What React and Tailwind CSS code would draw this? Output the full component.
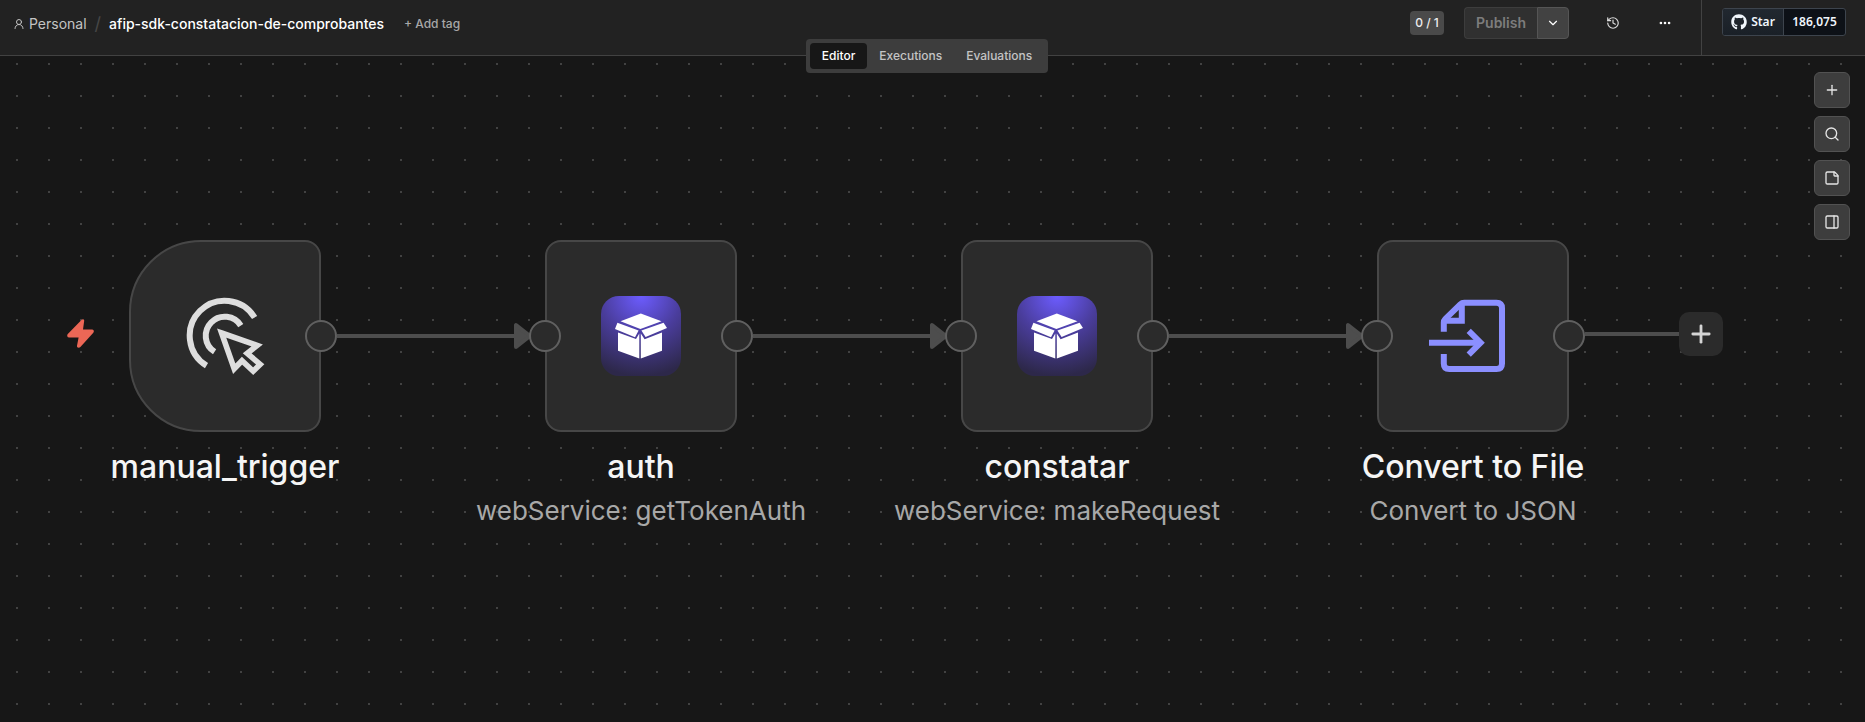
import { useState } from "react";
import { ChevronDown, Ellipsis, History, PanelRight, Plus, Search, StickyNote, UserRound } from "lucide-react";
import { FaGithub } from "react-icons/fa";

const TABS = ["Editor", "Executions", "Evaluations"];

const NODES = [
  { id: "trigger", left: 129, name: "manual_trigger", Icon: PointerIcon, trigger: true },
  { id: "auth", left: 545, name: "auth", subtitle: "webService: getTokenAuth", Icon: BoxIcon },
  { id: "constatar", left: 961, name: "constatar", subtitle: "webService: makeRequest", Icon: BoxIcon },
  { id: "convert", left: 1377, name: "Convert to File", subtitle: "Convert to JSON", Icon: FileIcon },
];

const TOOLS = [
  { label: "Add node", Icon: Plus },
  { label: "Search", Icon: Search },
  { label: "Add sticky note", Icon: StickyNote },
  { label: "Toggle panel", Icon: PanelRight },
];

function PointerIcon() {
  return (
    <svg className="size-20" viewBox="0 0 80 80" fill="none" stroke="#dedede" strokeWidth="6">
      <path d="M69.6 21.5A35 35 0 1 0 21.5 69.6" />
      <path d="M55.8 29.6A19 19 0 1 0 29.6 55.8" />
      <path d="M36.6 37 71.6 49.4 62.4 57.6 75.6 68.5 68.2 75.4 57.2 64.9 49.2 72.6Z" stroke="none" fill="#2b2b2b" />
      <path d="M36.6 37 72.2 49.4 62.2 57.4 75.2 68.3 68.2 75.2 57 64.7 49.2 72.8Z" strokeWidth="5.6" strokeMiterlimit="4" />
    </svg>
  );
}

function BoxIcon() {
  return (
    <svg className="size-20" viewBox="0 0 80 80">
      <defs>
        <radialGradient id="boxGlow" cx="0.5" cy="0" r="1">
          <stop offset="0" stopColor="#6c5cff" />
          <stop offset="0.5" stopColor="#4a3d9c" />
          <stop offset="1" stopColor="#2d284a" />
        </radialGradient>
      </defs>
      <rect width="80" height="80" rx="18" fill="url(#boxGlow)" />
      <g fill="#fff">
        <path d="M39.8 17.6 60.5 25.2 39.4 33 19.5 25.2Z" />
        <path d="M16.4 26.7 37.6 34.4 34 41.2 14 33Z" />
        <path d="M62.6 26.7 66 32 44.6 41 40.4 34.4Z" />
        <path d="M17 36.4 35 43 38.3 37.6V62.4L17 54.8Z" />
        <path d="M61 36.4 43.6 43.2 39.8 37.6V62.4L61 54.8Z" />
      </g>
    </svg>
  );
}

function FileIcon() {
  return (
    <svg className="size-20 overflow-visible" viewBox="0 0 80 80" fill="none" stroke="#8b8fff" strokeWidth="6">
      <path d="M10.8 35.7V26.5Q10.8 24.4 12.2 23L27.3 8.3Q29 6.7 31.2 6.7H63.5Q69 6.7 69 12.2V67.5Q69 73 63.5 73H16.3Q10.8 73 10.8 67.5V58" />
      <path d="M28.8 7V24.7H12" />
      <path d="M-4 46.7H48" />
      <path d="M35.7 34.9 47.6 46.7 35.7 58.7" />
    </svg>
  );
}

function Handle({ className }) {
  return <span className={`absolute top-20 size-8 rounded-full border-2 border-[#606060] bg-[#2b2b2b] ${className}`} />;
}

function WorkflowNode({ node, last }) {
  const { Icon, trigger } = node;
  return (
    <div className="absolute top-[184px] w-48" style={{ left: node.left }}>
      {trigger && (
        <svg className="absolute top-[77px] -left-16 size-8" viewBox="0 0 32 32" fill="#ec6756">
          <path d="M16.7 2.8C17.5 1.6 19.4 2.2 19.2 3.8L18 12.6H26.5C28.6 12.6 29.6 14.2 28.3 15.8L15.4 30C14.2 31.3 11.6 31 12 28.8L13.6 20.4H4.2C2.2 20.4 1.6 18.2 2.8 16.9Z" />
        </svg>
      )}
      <div
        className={`flex h-48 items-center justify-center border-2 border-[#474747] bg-[#2b2b2b] ${
          trigger ? "rounded-l-[72px] rounded-r-2xl" : "rounded-2xl"
        }`}
      >
        <Icon />
      </div>
      {!trigger && <Handle className="-left-4" />}
      <Handle className="-right-4" />
      {/* Caption is wider than the node, so centre it over the middle */}
      <div className="absolute top-[207px] left-1/2 -translate-x-1/2 text-center whitespace-nowrap">
        <div className="text-[32px] leading-10 font-medium text-[#f5f5f5]">{node.name}</div>
        {node.subtitle && <div className="mt-1 text-[26px] leading-10 text-[#a8a8a8]">{node.subtitle}</div>}
      </div>
      {last && (
        <div className="absolute top-[72px] left-[208px] flex items-center">
          <span className="h-1 w-[94px] bg-[#4d4d4d]" />
          <button type="button" aria-label="Add next node" className="flex size-11 items-center justify-center rounded-[10px] bg-[#2b2b2b] text-[#d4d4d4]">
            <Plus className="size-7" strokeWidth={2.4} />
          </button>
        </div>
      )}
    </div>
  );
}

function Connections() {
  return (
    <svg className="absolute top-0 left-0 size-full" fill="#4d4d4d" stroke="#4d4d4d">
      {NODES.slice(1).map((node) => (
        <g key={node.id}>
          <path d={`M${node.left - 208} 280H${node.left - 28}`} strokeWidth="4" />
          <path d={`M${node.left - 29} 269V291L${node.left - 15} 280Z`} strokeWidth="4" strokeLinejoin="round" />
        </g>
      ))}
    </svg>
  );
}

function Header() {
  const [tab, setTab] = useState("Editor");

  return (
    <header className="relative z-10 flex h-14 border-b border-[#424242] bg-[#222222]">
      <div className="flex h-12 flex-1 items-center pl-[13px] text-sm">
        <a href="#personal" className="flex items-center gap-1 text-[#c4c4c4]">
          <UserRound className="size-3" />
          Personal
        </a>
        <span className="mx-2 text-lg text-[#474747]">/</span>
        <h1 className="font-medium text-white">afip-sdk-constatacion-de-comprobantes</h1>
        <button type="button" className="ml-5 text-xs font-medium text-[#a8a8a8]">
          + Add tag
        </button>
      </div>

      <div className="flex h-[46px] items-center">
        <span className="flex h-6 w-[34px] items-center justify-center rounded bg-[#4a4a4a] text-xs font-medium text-[#eeeeee]">
          0 / 1
        </span>
        <div className="ml-5 flex h-8">
          <button type="button" disabled className="w-[73px] rounded-l border border-r-0 border-[#3d3d3d] bg-[#303030] text-sm font-semibold text-[#7d7d7d]">
            Publish
          </button>
          <button type="button" aria-label="Publish options" className="flex w-8 items-center justify-center rounded-r border border-[#555555] bg-[#424242] text-white">
            <ChevronDown className="size-3.5" />
          </button>
        </div>
        <button type="button" aria-label="History" className="ml-7 flex size-8 items-center justify-center text-[#dddddd]">
          <History className="size-3.5" />
        </button>
        <button type="button" aria-label="More" className="ml-5 flex size-8 items-center justify-center text-white">
          <Ellipsis className="size-3.5" strokeWidth={2.5} />
        </button>
      </div>

      <div className="ml-5 flex h-full border-l border-[#424242] pt-2 pr-[19px] pl-5">
        <a href="#star" className="flex h-7 rounded-[3px] border border-[#3d444d] bg-[#0d1117] font-['Noto_Sans',sans-serif] text-xs font-semibold text-[#f0f6fc]">
          <span className="flex w-[61px] items-center justify-center gap-1 rounded-l-[2px] border-r border-[#3d444d] bg-linear-to-b from-[#212830] to-[#1a2027]">
            <FaGithub className="size-4" />
            Star
          </span>
          <span className="flex w-[61px] items-center justify-center">186,075</span>
        </a>
      </div>

      {/* Tabs straddle the bottom edge of the header */}
      <div className="pointer-events-none absolute inset-x-0 top-[39px] flex justify-center pr-[11px]">
        <nav className="pointer-events-auto flex rounded bg-[#3d3d3d] p-1">
          {TABS.map((name) => (
            <button
              key={name}
              type="button"
              onClick={() => setTab(name)}
              className={`h-[26px] rounded px-3 text-xs font-medium ${
                tab === name ? "bg-[#171717] text-white" : "text-[#c4c4c4]"
              }`}
            >
              {name}
            </button>
          ))}
        </nav>
      </div>
    </header>
  );
}

export default function App() {
  return (
    <div className="flex min-h-screen flex-col bg-[#171717] font-['Inter',sans-serif]">
      <Header />
      <main className="relative flex-1 overflow-hidden bg-[radial-gradient(circle_at_17px_8px,#424242_1px,transparent_1px)] bg-size-[32px_32px]">
        <Connections />
        {NODES.map((node, i) => (
          <WorkflowNode key={node.id} node={node} last={i === NODES.length - 1} />
        ))}
        <div className="absolute top-4 right-[15px] flex flex-col gap-2">
          {TOOLS.map(({ label, Icon }) => (
            <button
              key={label}
              type="button"
              aria-label={label}
              className="flex size-9 items-center justify-center rounded-md border border-[#525252] bg-[#3d3d3d] text-[#e5e5e5]"
            >
              <Icon className="size-4" />
            </button>
          ))}
        </div>
      </main>
    </div>
  );
}
